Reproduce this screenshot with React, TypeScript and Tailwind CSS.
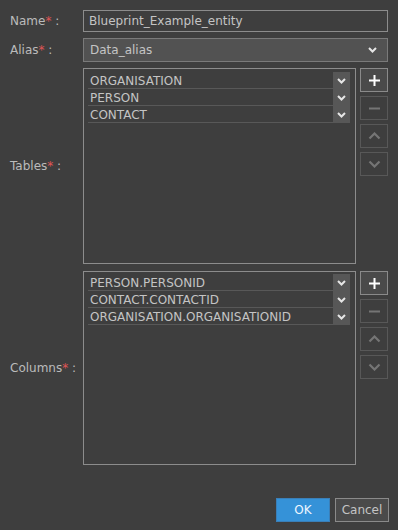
import React from "react";

const Chevron = ({ color = "#e6e6e6" }: { color?: string }) => (
  <svg width="9" height="6" viewBox="0 0 9 6">
    <polyline points="1,1 4.5,4.5 8,1" fill="none" stroke={color} strokeWidth="2" />
  </svg>
);

const Label = ({ text }: { text: string }) => (
  <div className="flex items-center whitespace-pre">
    <span>{text}</span>
    <span className="text-[#e05555]">*</span>
    <span> :</span>
  </div>
);

const ListRows = ({ items }: { items: string[] }) => (
  <div className="flex flex-col">
    {items.map((it) => (
      <div key={it} className="flex h-[17px]">
        <div className="flex-1 h-[17px] border-b border-[#585858] pl-[2px] leading-[18px] text-[#c4c4c4] whitespace-nowrap">{it}</div>
        <div className="w-[17px] bg-[#575757] flex items-center justify-center">
          <Chevron />
        </div>
      </div>
    ))}
  </div>
);

const SideButtons = () => (
  <div className="flex flex-col gap-[4px] w-[28px]">
    <div className="h-[24px] border border-[#8a8a8a] bg-[#4a4a4a] flex items-center justify-center">
      <svg width="13" height="13" viewBox="0 0 13 13">
        <path d="M6.5 1v11M1 6.5h11" stroke="#ffffff" strokeWidth="2" />
      </svg>
    </div>
    <div className="h-[24px] border border-[#585858] flex items-center justify-center">
      <svg width="13" height="13" viewBox="0 0 13 13">
        <path d="M1 6.5h11" stroke="#757575" strokeWidth="2" />
      </svg>
    </div>
    <div className="h-[24px] border border-[#585858] flex items-center justify-center">
      <svg width="13" height="8" viewBox="0 0 13 8">
        <polyline points="1.5,6.5 6.5,1.5 11.5,6.5" fill="none" stroke="#757575" strokeWidth="2.2" />
      </svg>
    </div>
    <div className="h-[24px] border border-[#585858] flex items-center justify-center">
      <svg width="13" height="8" viewBox="0 0 13 8">
        <polyline points="1.5,1.5 6.5,6.5 11.5,1.5" fill="none" stroke="#757575" strokeWidth="2.2" />
      </svg>
    </div>
  </div>
);

export default function App() {
  return (
    <div className="w-[398px] h-[530px] bg-[#3e3e3e] pt-[10px] pl-[10px] pr-[10px] flex flex-col font-['DejaVu_Sans',sans-serif] text-[12px] text-[#bbbbbb]">
      <div className="grid grid-cols-[73px_1fr]">
        <Label text="Name" />
        <div className="h-[22px] border border-[#8c8c8c] pl-[5px] flex items-center text-[#c4c4c4]">
          Blueprint_Example_entity
        </div>

        <div className="mt-[6px] flex items-center">
          <Label text="Alias" />
        </div>
        <div className="mt-[6px] h-[24px] border border-[#7a7a7a] bg-[#525252] pl-[6px] pr-[10px] flex items-center justify-between text-[#c4c4c4]">
          <span>Data_alias</span>
          <Chevron />
        </div>

        <div className="mt-[6px] flex items-center">
          <Label text="Tables" />
        </div>
        <div className="mt-[6px] flex gap-[4px]">
          <div className="flex-1 h-[196px] border border-[#8c8c8c] pt-[3px] pl-[4px] pr-[5px]">
            <ListRows items={["ORGANISATION", "PERSON", "CONTACT"]} />
          </div>
          <SideButtons />
        </div>

        <div className="mt-[7px] flex items-center">
          <Label text="Columns" />
        </div>
        <div className="mt-[7px] flex gap-[4px]">
          <div className="flex-1 h-[194px] border border-[#8c8c8c] pt-[2px] pl-[4px] pr-[5px]">
            <ListRows items={["PERSON.PERSONID", "CONTACT.CONTACTID", "ORGANISATION.ORGANISATIONID"]} />
          </div>
          <SideButtons />
        </div>
      </div>

      <div className="mt-[33px] flex justify-end gap-[5px] mr-[-1px]">
        <div className="w-[54px] h-[24px] bg-[#3592d8] border border-[#3a7fb8] flex items-center justify-center text-[#eef6ff]">
          OK
        </div>
        <div className="w-[54px] h-[24px] bg-[#4a4a4a] border border-[#8a8a8a] flex items-center justify-center text-[#c4c4c4]">
          Cancel
        </div>
      </div>
    </div>
  );
}
